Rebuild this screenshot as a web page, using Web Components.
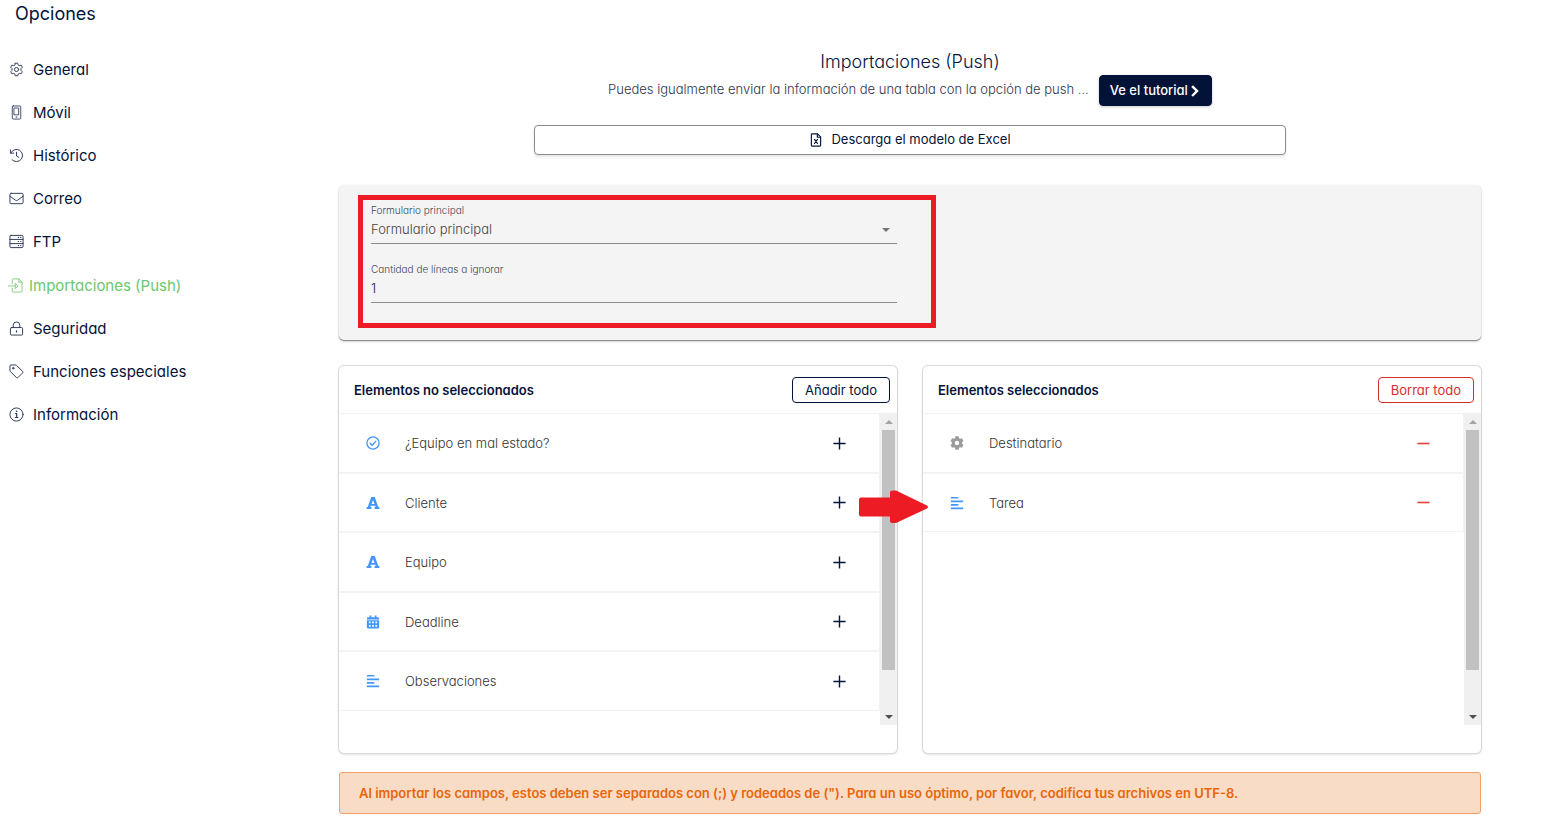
<!DOCTYPE html>
<html lang="es">
<head>
<meta charset="utf-8">
<meta name="viewport" content="width=device-width, initial-scale=1">
<title>Opciones - Importaciones (Push)</title>
<style>
  :root {
    --navy: #03133a;
    --green: #6cc66c;
    --blue: #4396fb;
    --red: #d32f2f;
    --mark: #ed1c24;
    --line: #f3f3f3;
    --fs-xs: 10px;
    --fs-sm: 13px;
    --fs-md: 15px;
    --fs-lg: 18px;
  }
  body {
    margin: 0;
    background: #fff;
    color: var(--navy);
    font-family: Inter, "Open Sans", sans-serif;
    font-size: 13px;
    font-feature-settings: "cv11";
  }
</style>
</head>
<body>
<options-page>
  <options-nav slot="nav">
    <nav-item icon="gear">General</nav-item>
    <nav-item icon="phone">Móvil</nav-item>
    <nav-item icon="history">Histórico</nav-item>
    <nav-item icon="mail">Correo</nav-item>
    <nav-item icon="server">FTP</nav-item>
    <nav-item icon="import" active>Importaciones (Push)</nav-item>
    <nav-item icon="lock">Seguridad</nav-item>
    <nav-item icon="tag">Funciones especiales</nav-item>
    <nav-item icon="info">Información</nav-item>
  </options-nav>

  <push-header>
    <span slot="title">Importaciones (Push)</span>
    <span slot="text">Puedes igualmente enviar la información de una tabla con la opción de push ...</span>
    <ui-button slot="action" kind="primary">Ve el tutorial<ui-icon name="chevron"></ui-icon></ui-button>
  </push-header>

  <import-form></import-form>

  <transfer-lists>
    <transfer-panel heading="Elementos no seleccionados">
      <ui-button slot="action" kind="outline">Añadir todo</ui-button>
      <transfer-row icon="check" action="plus">¿Equipo en mal estado?</transfer-row>
      <transfer-row icon="font" action="plus">Cliente</transfer-row>
      <transfer-row icon="font" action="plus">Equipo</transfer-row>
      <transfer-row icon="calendar" action="plus">Deadline</transfer-row>
      <transfer-row icon="align" action="plus">Observaciones</transfer-row>
    </transfer-panel>
    <transfer-panel heading="Elementos seleccionados">
      <ui-button slot="action" kind="danger">Borrar todo</ui-button>
      <transfer-row icon="cog" action="minus">Destinatario</transfer-row>
      <transfer-row icon="align" action="minus">Tarea</transfer-row>
    </transfer-panel>
  </transfer-lists>

  <alert-note>Al importar los campos, estos deben ser separados con (;) y rodeados de ("). Para un uso óptimo, por favor, codifica tus archivos en UTF-8.</alert-note>
</options-page>

<script>
const line = (body, w = 1) => `<g fill="none" stroke="currentColor" stroke-width="${w}" stroke-linecap="round" stroke-linejoin="round">${body}</g>`;

const ICONS = {
  gear: line('<path d="M6.7 1.3h2.6l.5 1.9 1.2.7 1.9-.6 1.3 2.3-1.4 1.4v1.9l1.4 1.5-1.3 2.2-1.9-.5-1.2.7-.5 1.9H6.7l-.5-1.9-1.2-.7-1.9.5-1.3-2.2 1.4-1.5V7L1.8 5.600l1.3-2.300 1.900.600 1.200-.700z"/><circle cx="8" cy="8" r="2.200"/>'),
  phone: line('<rect x="3.500" y="1" width="9" height="14" rx="1"/><path d="M5.700 3.200h4.600v7.300H5.700z"/><path d="M7.700 12.800h.6" stroke-width="1.300"/>', 0.9),
  history: line('<path d="M1.500 2v3.500H5M2 5.300A6.500 6.500 0 1 1 3.300 12.600M8 4.500V8.500l2.500 1.500"/>'),
  mail: line('<rect x="1" y="2.500" width="14" height="11" rx="1.200"/><path d="M1 5.500l5.800 4.300q1.200.8 2.400 0L15 5.500"/>'),
  server: line('<rect x="1" y="1.500" width="14" height="13" rx="1.200"/><path d="M1 5.800h14M1 10.200h14"/><path d="M10 3.700h.1M12.500 3.700h.1M10 8h.1M12.500 8h.1M10 12.300h.1M12.500 12.300h.1" stroke-width="1.300"/>'),
  import: line('<path d="M4.500 6V2q0-1 1-1H11.500L15 4.500V14q0 1-1 1H5.500q-1 0-1-1V11M11.500 1V4.500H15M0.500 8.500H8"/><path d="M8 6l2.800 2.500L8 11z"/>'),
  lock: line('<rect x="1.500" y="7" width="13" height="8" rx="1.200"/><path d="M4.500 7V4.500a3.500 3.500 0 0 1 7 0V7"/><path d="M8 10.500v1.200" stroke-width="1.300"/>'),
  tag: line('<path d="M1 2q0-1 1-1H7q.6 0 1 .4l6.500 6.500q.8.800 0 1.600l-5 5q-.8.700-1.500 0l-6.600-6.500q-.4-.4-.4-1z"/><circle cx="4.500" cy="4.500" r=".800"/>'),
  info: line('<circle cx="8" cy="8" r="7"/><path d="M7 7h1.200v4M6.700 11.200h2.800" stroke-width="1.200"/><path d="M8 4.600h.1" stroke-width="1.600"/>'),
  excel: line('<path d="M2.700 2q0-1 1-1h6L13.300 4.500V14q0 1-1 1H3.700q-1 0-1-1z"/><path d="M9.500 1.200V4.800H13"/><path d="M6.300 7.300l3.400 4.700M9.700 7.300L6.300 12"/>', 1.3),
  chevron: '<path d="M3 2.500L5.300.3 13 8l-7.700 7.700L3 13.500 8.500 8z" fill="currentColor"/>',
  check: line('<circle cx="8" cy="8" r="7"/><path d="M4.800 8.300l2.300 2.200 4.200-4.600"/>', 1.5),
  font: '<path fill="currentColor" fill-rule="evenodd" d="M6 1h4l4 11.500h1.300v2.300H9.800v-2.300h1.300l-.4-1.300H5.300l-.4 1.300h1.300v2.300H.7v-2.300H2zM8 4.700L6.300 9h3.400z"/>',
  calendar: '<path fill="currentColor" fill-rule="evenodd" d="M4 .5h2v2h4v-2h2v2h1.500q1.500 0 1.500 1.500v1H1V4q0-1.500 1.500-1.500H4zM1 6h14v8q0 1.500-1.500 1.500h-11Q1 15.500 1 14zM3.300 7.500v2h2v-2zM7 7.500v2h2v-2zM10.700 7.500v2h2v-2zM3.300 11.500v2h2v-2zM7 11.500v2h2v-2zM10.700 11.500v2h2v-2z"/>',
  align: '<path fill="currentColor" d="M1 1h8.500v1.900H1zM1 5.100h14V7H1zM1 9.200h8.500v1.900H1zM1 13.200h14v1.900H1z"/>',
  cog: '<path fill="currentColor" fill-rule="evenodd" d="M6.200.3h3.600l.5 2.200 1.200.7 2.100-.7 1.800 3.100-1.600 1.500v1.800l1.600 1.500-1.800 3.100-2.100-.7-1.200.7-.5 2.200H6.200l-.5-2.200-1.200-.7-2.100.7-1.800-3.100 1.600-1.500V7.100L.6 5.600l1.800-3.100 2.100.7 1.200-.7zM8 5.500a2.500 2.500 0 1 0 0 5 2.500 2.500 0 0 0 0-5z"/>',
  plus: '<path d="M8 1.500v13M1.500 8h13" stroke="currentColor" stroke-width="1.500" fill="none"/>',
  minus: '<path d="M1.500 8h13" stroke="currentColor" stroke-width="1.700" fill="none"/>'
};

class Base extends HTMLElement {
  connectedCallback() {
    if (this.shadowRoot) return;
    this.attachShadow({ mode: 'open' }).innerHTML = `<style>*{box-sizing:border-box}${this.css()}</style>${this.html()}`;
  }
}

customElements.define('ui-icon', class extends Base {
  css() { return `:host{display:inline-flex;width:var(--icon,16px);height:var(--icon,16px);flex:none} svg{width:100%;height:100%}`; }
  html() { return `<svg viewBox="0 0 16 16" aria-hidden="true">${ICONS[this.getAttribute('name')]}</svg>`; }
});

customElements.define('ui-button', class extends Base {
  css() { return `
    :host{display:block}
    button{display:flex;align-items:center;justify-content:center;gap:4px;width:100%;font:inherit;font-size:var(--fs-sm);
      line-height:19px;font-feature-settings:inherit;border-radius:4px;padding:3px 12px 2px;background:#fff;color:var(--navy);border:1px solid var(--navy);white-space:nowrap}
    :host([kind=primary]) button{background:#031237;color:#fff;font-weight:500;padding:5px 10px;gap:1px;box-shadow:0 1px 3px #0003;--icon:12px}
    :host([kind=danger]) button{color:var(--red);border-color:var(--red)}
    :host([kind=wide]) button{border-color:#8a8a8a;padding:4px 12px 5px;gap:8px;box-shadow:0 2px 3px #0000001a;--icon:14px}`; }
  html() { return `<button type="button"><slot></slot></button>`; }
});

customElements.define('options-page', class extends Base {
  css() { return `
    :host{display:grid;grid-template-columns:minmax(200px,339px) minmax(0,1fr);min-height:100vh}
    main{padding:50px 86px 20px 0;display:flex;flex-direction:column}`; }
  html() { return `<slot name="nav"></slot><main><slot></slot></main>`; }
});

customElements.define('options-nav', class extends Base {
  css() { return `
    :host{display:block}
    h1{margin:0 0 22px;padding:2px 15px 0;font-size:var(--fs-lg);line-height:24px;font-weight:400}
    nav{display:flex;flex-direction:column}`; }
  html() { return `<h1>Opciones</h1><nav aria-label="Opciones"><slot></slot></nav>`; }
});

customElements.define('nav-item', class extends Base {
  css() { return `
    :host{display:block;--icon:15px}
    a{display:flex;align-items:center;gap:9px;padding:0 9px;height:43px;color:inherit;text-decoration:none;font-size:var(--fs-md)}
    ui-icon{opacity:.85}
    :host([active]){color:var(--green)}
    :host([active]) a{gap:6px;padding-left:8px;height:44px}`; }
  html() { return `<a href="#"><ui-icon name="${this.getAttribute('icon')}"></ui-icon><span><slot></slot></span></a>`; }
});

customElements.define('push-header', class extends Base {
  css() { return `
    :host{display:flex;flex-direction:column;align-items:center}
    h2{margin:0 0 1px;font-size:var(--fs-lg);line-height:24px;font-weight:300}
    .intro{display:flex;gap:10px;font-weight:300}
    p{margin:0;line-height:28px;color:#2c3550}
    .wide{width:100%;max-width:752px;margin-top:19px}`; }
  html() { return `<h2><slot name="title"></slot></h2>
    <div class="intro"><p><slot name="text"></slot></p><slot name="action"></slot></div>
    <ui-button class="wide" kind="wide"><ui-icon name="excel"></ui-icon><span>Descarga el modelo de Excel</span></ui-button>`; }
});

customElements.define('import-form', class extends Base {
  css() { return `
    :host{display:block;position:relative;margin-top:30px;padding:19px 0 37px;background:#f4f4f4;border-radius:5px;
      box-shadow:0 1px 1px #0006,0 2px 3px #0002,0 0 2px #0001}
    form{display:grid;gap:19px;width:50%;padding:0 13px 0 32px}
    .field{display:flex;flex-direction:column}
    label{font-size:var(--fs-xs);line-height:13px;font-weight:300;color:#3f4556}
    input,select{appearance:none;width:100%;height:27px;margin:0;border:0;border-bottom:1px solid #8c8c8c;border-radius:0;
      padding:0 0 2px;background:none;font:inherit;font-weight:300;font-size:var(--fs-sm);font-feature-settings:inherit;color:#222;outline:0}
    select{color:#444}
    .pick{position:relative}
    .pick::after{content:"";position:absolute;right:7px;top:11px;border:4px solid transparent;border-top-color:#757575;border-bottom:0;pointer-events:none}
    .mark{position:absolute;left:19px;right:calc(50% - 26px);top:10px;bottom:12px;border:5px solid var(--mark);pointer-events:none}`; }
  html() { return `<form>
      <div class="field"><label for="main">Formulario principal</label><div class="pick"><select id="main"><option>Formulario principal</option></select></div></div>
      <div class="field"><label for="skip">Cantidad de líneas a ignorar</label><input id="skip" value="1"></div>
    </form><div class="mark"></div>`; }
});

customElements.define('transfer-lists', class extends Base {
  css() { return `
    :host{display:grid;grid-template-columns:1fr 1fr;gap:26px;position:relative;margin-top:26px}
    .arrow{position:absolute;left:calc(50% - 51px);top:124px;width:69px;height:34px;color:var(--mark)}`; }
  html() { return `<slot></slot><svg class="arrow" viewBox="0 0 69 34" aria-hidden="true"><path fill="currentColor" d="M2 7.500H31V2.500Q31 .5 34 .5H37L68 15.500Q70 17 68 18.500L37 33H34Q31 33 31 31V26.500H2Q0 26.500 0 24.500V9.500Q0 7.500 2 7.500z"/></svg>`; }
});

customElements.define('transfer-panel', class extends Base {
  css() { return `
    :host{display:block;border-radius:5px;background:#fff;box-shadow:0 0 0 1px #d9d9d9,0 1px 3px #0003}
    header{display:flex;align-items:center;justify-content:space-between;height:47px;padding:0 7px 0 15px}
    h3{margin:0;font-size:var(--fs-sm);font-weight:600}
    .scroll{display:flex;height:312px;margin-bottom:28px}
    .rows{flex:1;min-width:0}
    .bar{width:17px;background:#f0f0f0;display:flex;flex-direction:column;align-items:center;padding:7px 0 6px}
    .bar i{border:4px solid transparent}
    .up{border-top:0!important;border-bottom-color:#a3a3a3!important}
    .down{border-bottom:0!important;border-top-color:#505050!important;margin-top:auto}
    .thumb{width:13px;height:240px;margin-top:6px;background:#c1c1c1}`; }
  html() { return `<header><h3>${this.getAttribute('heading')}</h3><slot name="action"></slot></header>
    <div class="scroll"><div class="rows"><slot></slot></div><div class="bar"><i class="up"></i><div class="thumb"></div><i class="down"></i></div></div>`; }
});

customElements.define('transfer-row', class extends Base {
  css() { return `
    :host{display:flex;align-items:center;box-sizing:border-box;height:60px;padding:0 32px 0 27px;border:1px solid var(--line);border-left:0;color:#333}
    :host(:nth-of-type(even)){height:59px}
    .kind{color:var(--blue);--icon:14px}
    .kind[name=cog]{color:#9b9b9b}
    span{flex:1;margin-left:25px;font-size:var(--fs-sm);font-weight:300}
    button{display:flex;border:0;padding:0;background:none;color:var(--navy);--icon:15px}
    :host([action=minus]) button{color:#e8403a}`; }
  html() { const a = this.getAttribute('action');
    return `<ui-icon class="kind" name="${this.getAttribute('icon')}"></ui-icon><span><slot></slot></span>
    <button type="button" aria-label="${a === 'plus' ? 'Añadir' : 'Borrar'}"><ui-icon name="${a}"></ui-icon></button>`; }
});

customElements.define('alert-note', class extends Base {
  css() { return `
    :host{display:block;margin-top:19px;padding:10px 19px;border:1px solid #f2a163;border-radius:3px;background:#f9dcc6;
      color:#e8660c;font-size:var(--fs-sm);line-height:20px;font-weight:600}`; }
  html() { return `<slot></slot>`; }
});
</script>
</body>
</html>
